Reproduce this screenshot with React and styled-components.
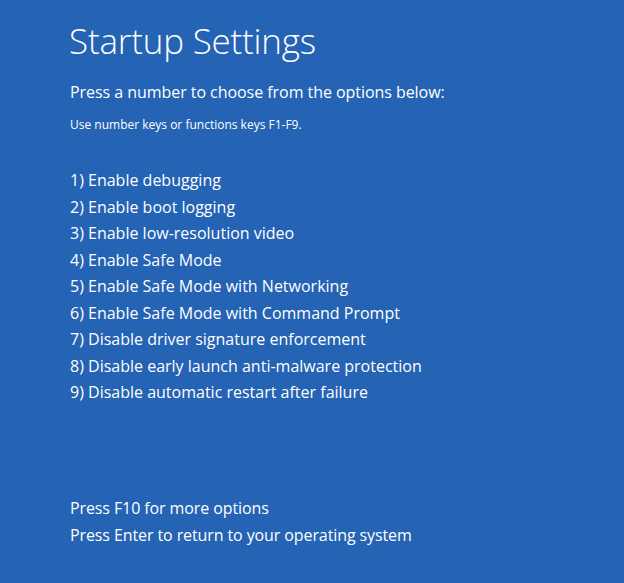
import React from "react";
import styled, { createGlobalStyle } from "styled-components";

const Global = createGlobalStyle`
  html, body { margin: 0; padding: 0; background: #2563b4; }
  body { font-family: "Open Sans", "Noto Sans", sans-serif; color: #fff; }
`;

const Screen = styled.div`
  width: 624px;
  height: 583px;
  background: #2563b4;
  box-sizing: border-box;
  padding: 19px 0 0 69px;
  display: flex;
  flex-direction: column;
`;

const Title = styled.h1`
  margin: 0;
  font-weight: 300;
  font-size: 35px;
  line-height: 44px;
  letter-spacing: -0.2px;
`;

const Subtitle = styled.p`
  margin: 18px 0 0 1px;
  font-size: 16px;
  line-height: 22px;
  letter-spacing: -0.05px;
`;

const Hint = styled.p`
  margin: 14px 0 0 1px;
  font-size: 12px;
  line-height: 16px;
`;

const Options = styled.ol`
  list-style: none;
  margin: 34px 0 0 1px;
  padding: 0;
`;

const Option = styled.li`
  font-size: 16px;
  line-height: 26.5px;
`;

const Footer = styled.div`
  margin-top: auto;
  margin-bottom: 35px;
  margin-left: 1px;
`;

const FooterLine = styled.div`
  font-size: 16px;
  line-height: 26.5px;
  letter-spacing: -0.1px;
`;

const options = [
  "Enable debugging",
  "Enable boot logging",
  "Enable low-resolution video",
  "Enable Safe Mode",
  "Enable Safe Mode with Networking",
  "Enable Safe Mode with Command Prompt",
  "Disable driver signature enforcement",
  "Disable early launch anti-malware protection",
  "Disable automatic restart after failure",
];

export default function App() {
  return (
    <>
      <Global />
      <Screen>
        <Title>Startup Settings</Title>
        <Subtitle>Press a number to choose from the options below:</Subtitle>
        <Hint>Use number keys or functions keys F1-F9.</Hint>
        <Options>
          {options.map((o, i) => (
            <Option key={i}>{`${i + 1}) ${o}`}</Option>
          ))}
        </Options>
        <Footer>
          <FooterLine>Press F10 for more options</FooterLine>
          <FooterLine>Press Enter to return to your operating system</FooterLine>
        </Footer>
      </Screen>
    </>
  );
}
